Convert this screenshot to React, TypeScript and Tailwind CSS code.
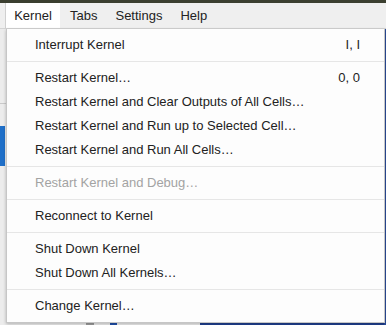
import React from "react";

type Item = { label: string; shortcut?: string; disabled?: boolean } | "sep";

const items: Item[] = [
  { label: "Interrupt Kernel", shortcut: "I, I" },
  "sep",
  { label: "Restart Kernel…", shortcut: "0, 0" },
  { label: "Restart Kernel and Clear Outputs of All Cells…" },
  { label: "Restart Kernel and Run up to Selected Cell…" },
  { label: "Restart Kernel and Run All Cells…" },
  "sep",
  { label: "Restart Kernel and Debug…", disabled: true },
  "sep",
  { label: "Reconnect to Kernel" },
  "sep",
  { label: "Shut Down Kernel" },
  { label: "Shut Down All Kernels…" },
  "sep",
  { label: "Change Kernel…" },
];

const MenuRow: React.FC<{ label: string; shortcut?: string; disabled?: boolean }> = ({ label, shortcut, disabled }) => {
  return (
    <div className={`flex h-6 items-center justify-between pl-[28px] pr-[24px] ${disabled ? "text-[#a3a3a3]" : "text-[#222]"}`}>
      <span>{label}</span>
      {shortcut && <span>{shortcut}</span>}
    </div>
  );
};

export default function App() {
  return (
    <div
      className="relative flex h-[325px] w-[386px] flex-col overflow-hidden bg-[#ececec] text-[13px]"
      style={{ fontFamily: '"Liberation Sans", Arial, sans-serif' }}
    >
      <div className="h-[3px] bg-[#3b3f30]" />
      <div className="flex h-[26px] items-stretch border-b border-[#d4d4d4] bg-[#efefef] text-[#222]">
        <div className="w-[6px] border-r border-[#d0d0d0]" />
        <div className="flex w-[54px] items-center justify-center bg-white">Kernel</div>
        <div className="flex items-center px-[10px]">Tabs</div>
        <div className="flex items-center px-[8px]">Settings</div>
        <div className="flex items-center px-[10px]">Help</div>
      </div>

      {/* page content behind the menu */}
      <div className="flex flex-1">
        <div className="flex w-[6px] flex-col">
          <div className="h-[75px] border-b border-[#c9c9c9]" />
          <div className="h-[22px]" />
          <div className="h-[40px] w-[5px] bg-[#1f6fc8]" />
        </div>
        <div className="flex flex-1 flex-col justify-end">
          <div className="flex h-[3px]">
            <div className="w-[80px]" />
            <div className="w-[8px] bg-[#9a9a9a]" />
            <div className="w-[16px]" />
            <div className="w-[7px] bg-[#1f4fa8]" />
            <div className="w-[83px]" />
            <div className="flex-1 bg-[#1f3f8f]" />
          </div>
        </div>
        <div className="w-[2px] bg-[#2a4c9a]" />
      </div>

      <div className="absolute left-[6px] top-[29px] w-[379px] border border-t-0 border-[#c6c6c6] bg-[#fdfdfd] py-1 shadow-[0_1px_3px_rgba(0,0,0,0.25)]">
        {items.map((it, i) =>
          it === "sep" ? (
            <div key={i} className="py-1">
              <div className="h-px bg-[#e6e6e6]" />
            </div>
          ) : (
            <MenuRow key={i} {...it} />
          )
        )}
      </div>
    </div>
  );
}
